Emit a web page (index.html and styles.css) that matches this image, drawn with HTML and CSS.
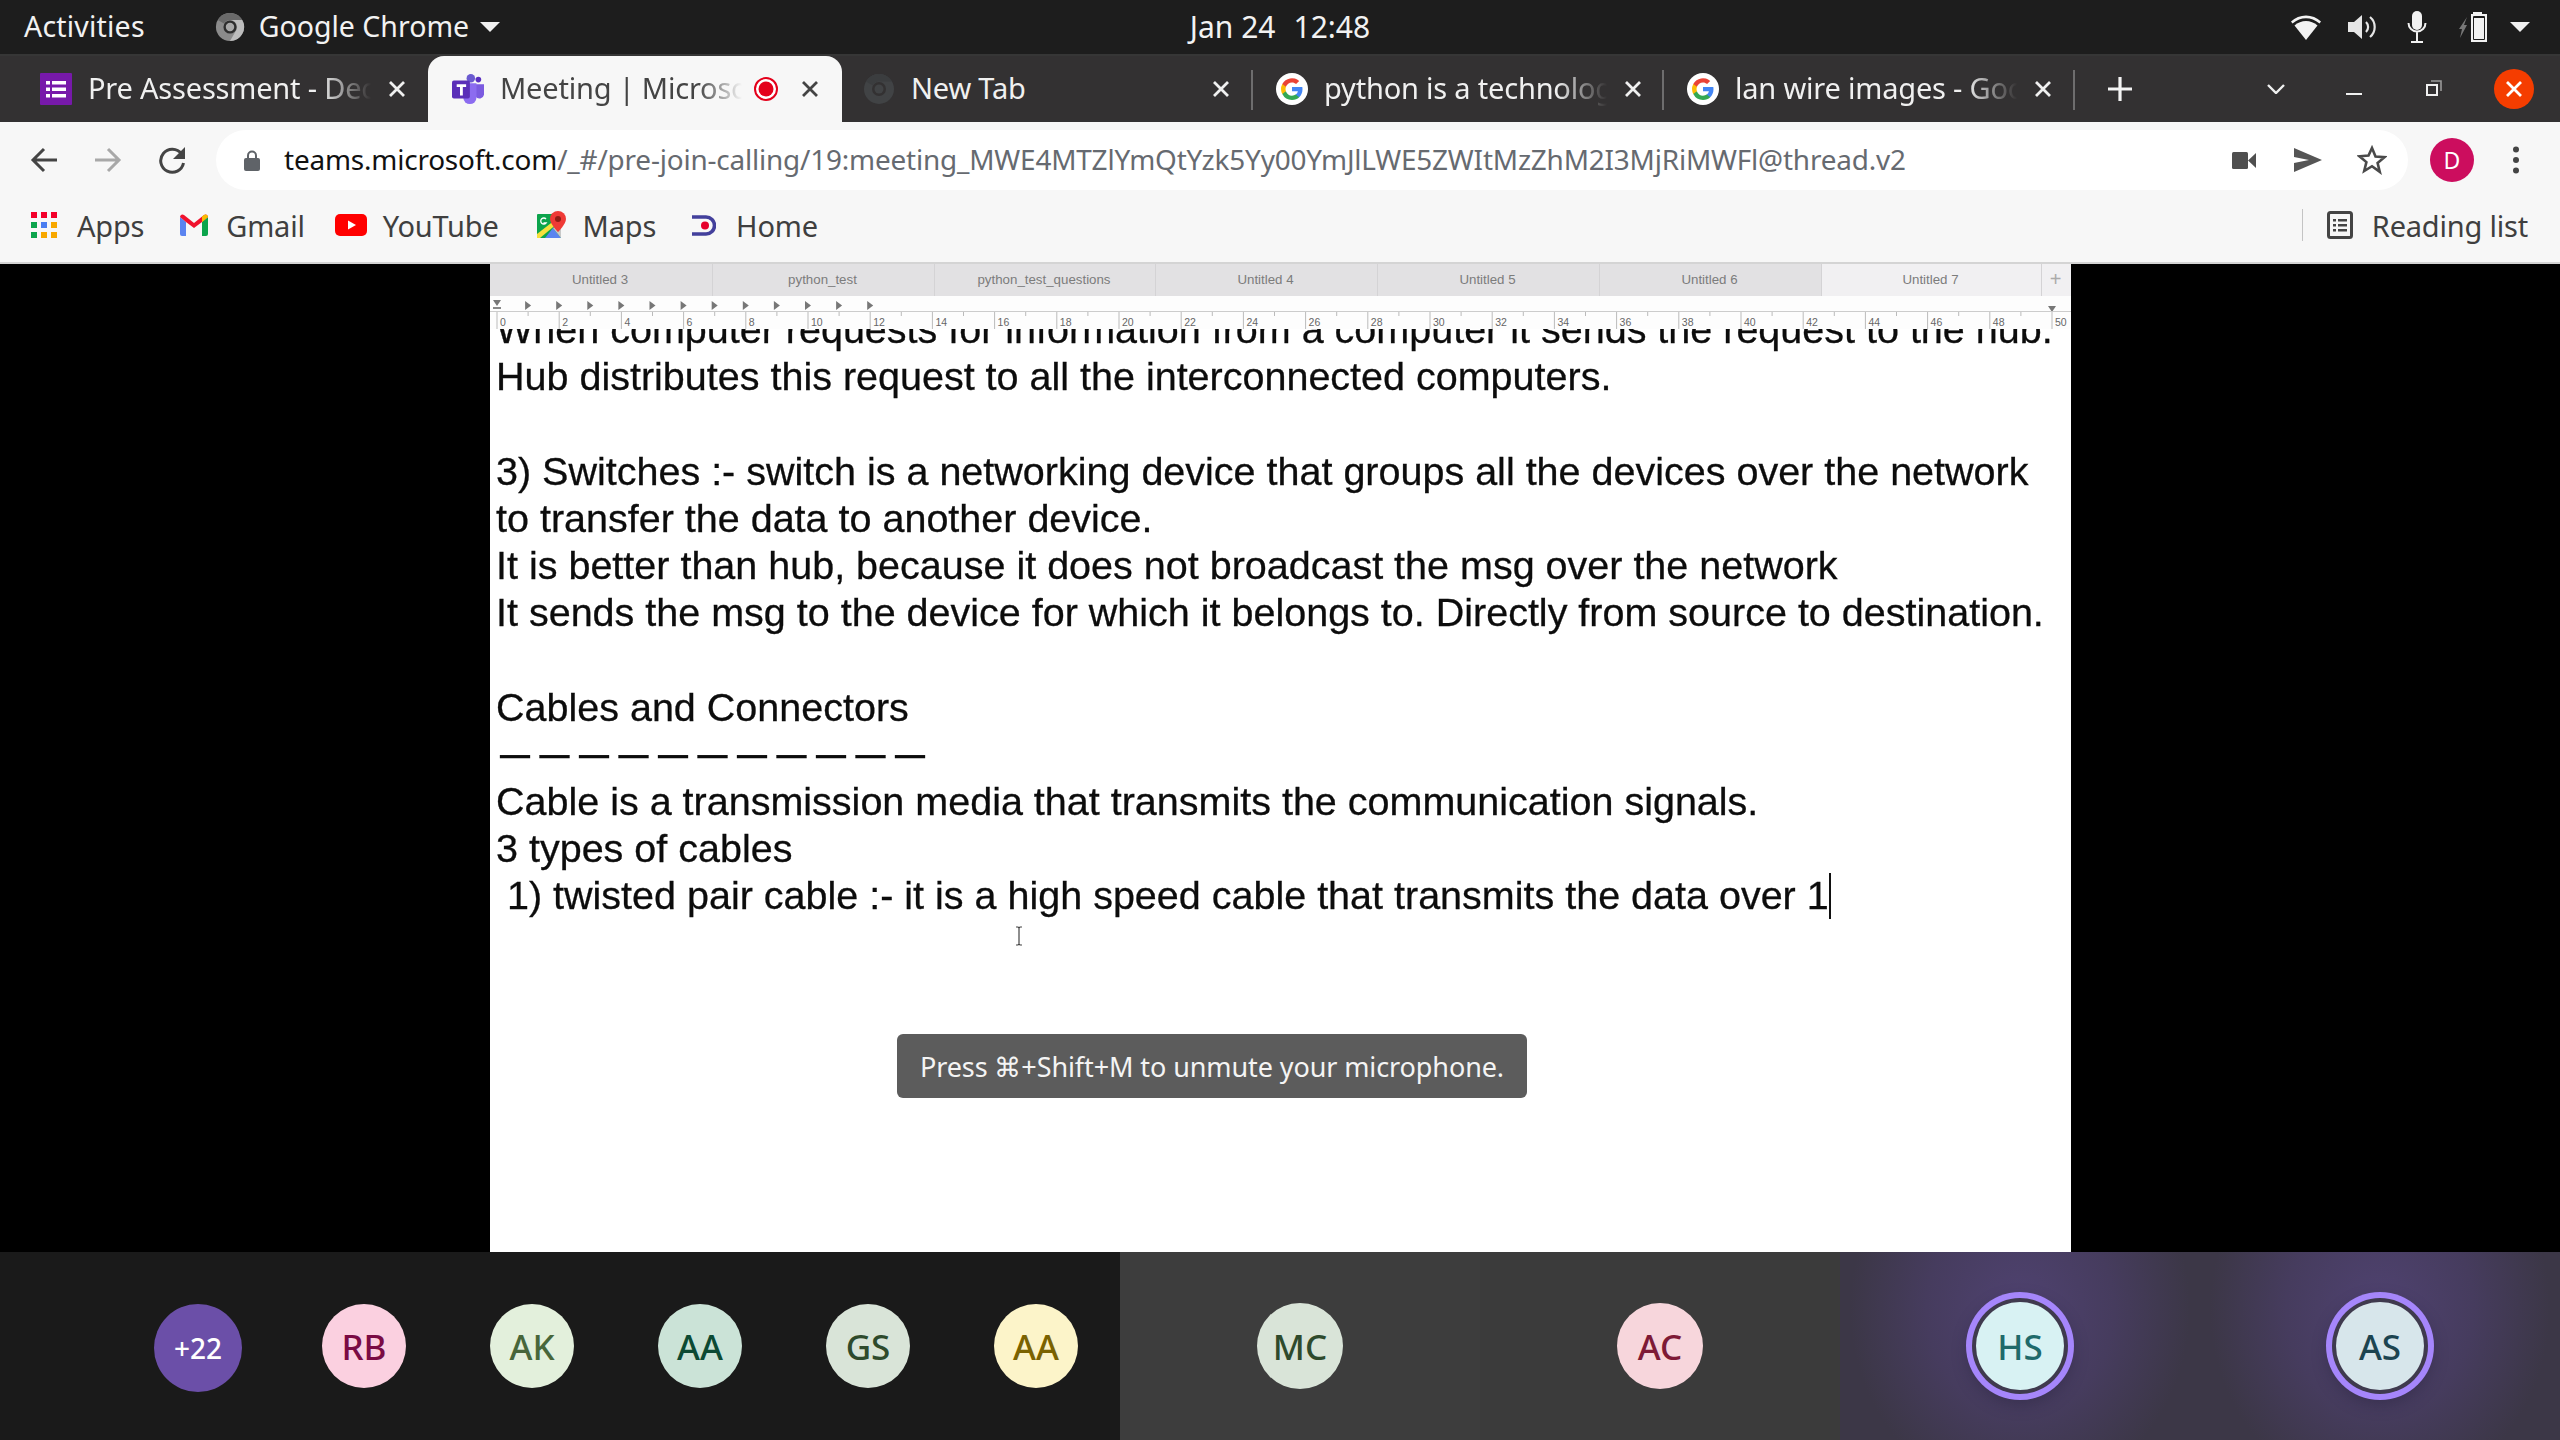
FILE: index.html
```html
<!DOCTYPE html>
<html lang="en">
<head>
<meta charset="utf-8">
<title>Meeting | Microsoft Teams</title>
<link rel="stylesheet" href="styles.css">
</head>
<body>
<svg class="defs" width="0" height="0"><defs>
<g id="g-logo"><circle cx="16" cy="16" r="16" fill="#fff"/><path d="M26.500 16.300c0-.800-.100-1.500-.200-2.200H16v4.200h5.900a5 5 0 0 1-2.200 3.300v2.700h3.500c2-1.900 3.300-4.700 3.300-8z" fill="#4285f4"/><path d="M16 27c3 0 5.400-1 7.200-2.700l-3.500-2.700c-1 .700-2.200 1.100-3.700 1.100-2.800 0-5.300-1.900-6.100-4.500H6.300v2.800A11 11 0 0 0 16 27z" fill="#34a853"/><path d="M9.900 18.200a6.600 6.600 0 0 1 0-4.400V11H6.300a11 11 0 0 0 0 10z" fill="#fbbc05"/><path d="M16 9.400c1.600 0 3 .500 4.100 1.600l3.100-3.100A11 11 0 0 0 6.300 11l3.600 2.800C10.700 11.300 13.200 9.400 16 9.400z" fill="#ea4335"/></g>
<path id="close-x" d="M2 2 16 16M16 2 2 16" fill="none" stroke="currentColor" stroke-width="2.800"/>
</defs></svg>
<div class="screen">
  <header class="topbar">
    <div class="top-left">
      <span class="activities">Activities</span>
      <span class="app"><svg class="chrome-mono" viewBox="0 0 32 32"><circle cx="16" cy="16" r="15" fill="#8b8b8b"/><path d="M29 8.500A15 15 0 0 1 16 31l6.500-11.250A7.500 7.500 0 0 0 16 8.500z" fill="#bdbdbd"/><path d="M16 1a15 15 0 0 1 13 7.500H16a7.500 7.500 0 0 0-6.500 3.750L3 8.500A15 15 0 0 1 16 1z" fill="#6a6a6a"/><circle cx="16" cy="16" r="7" fill="#2d2d2d"/><circle cx="16" cy="16" r="4.500" fill="#a8a8a8"/></svg><span class="app-name">Google Chrome</span><svg class="caret" viewBox="0 0 20 10"><path d="M0 0h20L10 10z" fill="#f0f0f0"/></svg></span>
    </div>
    <div class="clock"><span>Jan 24</span><span>12:48</span></div>
    <div class="status">
      <svg class="st wifi" viewBox="0 0 30 25"><path d="M0 6.500C8-1.500 22-1.500 30 6.500l-1.500 2C20 1.500 10 1.500 1.500 8.500z" fill="#f2f2f2"/><path d="M3.500 10.500C10 4.500 20 4.500 26.500 10.500L15 25z" fill="#f2f2f2"/></svg>
      <svg class="st vol" viewBox="0 0 30 26"><path d="M1 8h6l8-7v24l-8-7H1z" fill="#e6e6e6"/><path d="M19 8a7 7 0 0 1 0 10M23 3a13 13 0 0 1 0 20" stroke="#e6e6e6" stroke-width="2.200" fill="none"/></svg>
      <svg class="st mic" viewBox="0 0 20 32"><rect x="5" y="0" width="10" height="19" rx="5" fill="#f2f2f2"/><path d="M1.500 12a8.500 8.500 0 0 0 17 0M10 21v9M4 31h12" stroke="#f2f2f2" stroke-width="2" fill="none"/></svg>
      <svg class="st batt" viewBox="0 0 29 30"><path d="M8 5 0 17h3l-2 9 7-13H5z" fill="#777"/><path d="M14 0h9v2h5v28H12V2h2z" fill="#f2f2f2"/><rect x="14" y="4" width="12" height="24" rx="1" fill="#1d1d1d"/><rect x="15" y="6" width="10" height="21" fill="#f2f2f2"/></svg>
      <svg class="caret" viewBox="0 0 20 10"><path d="M0 0h20L10 10z" fill="#f0f0f0"/></svg>
    </div>
  </header>

  <nav class="tabstrip">
    <div class="tab t1">
      <svg class="fav" viewBox="0 0 32 32"><rect width="32" height="32" rx="1" fill="#7719aa"/><path d="M6 8h4v3.500H6zm6 0h14v3.500H12zM6 14.500h4V18H6zm6 0h14V18H12zM6 21h4v3.500H6zm6 0h14v3.500H12z" fill="#fff"/></svg>
      <span class="title">Pre Assessment - Dec</span><svg class="x" viewBox="0 0 18 18"><use href="#close-x"/></svg>
    </div>
    <div class="tab active">
      <svg class="fav" viewBox="0 0 34 32"><circle cx="20" cy="4.500" r="4.500" fill="#6a5ad0"/><circle cx="28" cy="6" r="3" fill="#5a2fc0"/><path d="M25 11h9v11a5 5 0 0 1-9 2z" fill="#7b5be0"/><path d="M12 10h14v15a7 7 0 0 1-14 0z" fill="#8c6cf0"/><rect x="0" y="7" width="19" height="19" rx="2" fill="#5a2fb8"/><path d="M5 11h10v3h-3.500v9h-3v-9H5z" fill="#fff"/></svg>
      <span class="title">Meeting | Microsoft</span>
      <svg class="rec" viewBox="0 0 24 24"><circle cx="12" cy="12" r="11" fill="#fff" stroke="#e4001b" stroke-width="2"/><circle cx="12" cy="12" r="7.500" fill="#e4001b"/></svg>
      <svg class="x" viewBox="0 0 18 18"><use href="#close-x"/></svg>
    </div>
    <div class="tab t3 sep">
      <svg class="fav" viewBox="0 0 32 32"><circle cx="16" cy="16" r="15" fill="#414345"/><path d="M16 1a15 15 0 0 1 13 7.500H16a7.500 7.500 0 0 0-6.500 3.750L3 8.500A15 15 0 0 1 16 1z" fill="#3b3d3f"/><circle cx="16" cy="16" r="7" fill="#333132"/><circle cx="16" cy="16" r="4.500" fill="#414345"/></svg>
      <span class="title plain">New Tab</span><svg class="x" viewBox="0 0 18 18"><use href="#close-x"/></svg>
    </div>
    <div class="tab t4 sep">
      <svg class="fav" viewBox="0 0 32 32"><use href="#g-logo"/></svg>
      <span class="title">python is a technology</span><svg class="x" viewBox="0 0 18 18"><use href="#close-x"/></svg>
    </div>
    <div class="tab t5 sep">
      <svg class="fav" viewBox="0 0 32 32"><use href="#g-logo"/></svg>
      <span class="title">lan wire images - Google</span><svg class="x" viewBox="0 0 18 18"><use href="#close-x"/></svg>
    </div>
    <svg class="plus" viewBox="0 0 26 26"><path d="M13 1v24M1 13h24" fill="none" stroke="#f4f4f4" stroke-width="3.200"/></svg>
    <div class="winctl">
      <svg class="chev" viewBox="0 0 18 10"><path d="M1 1l8 8 8-8" fill="none" stroke="#f0f0f0" stroke-width="2.400"/></svg>
      <span class="min"></span>
      <svg class="restore" viewBox="0 0 16 16"><rect x="1" y="5" width="10" height="10" fill="none" stroke="#f0f0f0" stroke-width="2"/><path d="M5 1h10v10" fill="none" stroke="#999" stroke-width="1.600"/></svg>
      <span class="close"><svg class="close-x" viewBox="0 0 18 18"><use href="#close-x"/></svg></span>
    </div>
  </nav>

  <div class="toolbar">
    <svg class="nav back" viewBox="0 0 28 28"><path d="M27 14H4M14 3 3 14l11 11" fill="none" stroke="#444" stroke-width="3"/></svg>
    <svg class="nav fwd" viewBox="0 0 28 28"><path d="M1 14h23M14 3l11 11-11 11" fill="none" stroke="#a8a8a8" stroke-width="3"/></svg>
    <svg class="nav reload" viewBox="0 0 28 28"><path d="M23.500 8a11.500 11.500 0 1 0 2 9" fill="none" stroke="#444" stroke-width="3"/><path d="M27 1v12H15z" fill="#444"/></svg>
    <div class="omnibox">
      <svg class="lock" viewBox="0 0 16 21"><path d="M4 9V5.500a4 4 0 0 1 8 0V9" fill="none" stroke="#5f6368" stroke-width="2"/><rect y="8" width="16" height="13" rx="2" fill="#5f6368"/></svg>
      <span class="url"><b>teams.microsoft.com</b>/_#/pre-join-calling/19:meeting_MWE4MTZlYmQtYzk5Yy00YmJlLWE5ZWItMzZhM2I3MjRiMWFl@thread.v2</span>
      <svg class="omni-ic video" viewBox="0 0 24 17"><rect width="16" height="17" rx="1.500" fill="#4f4f4f"/><path d="M16 8.500 24 1v15z" fill="#4f4f4f"/></svg>
      <svg class="omni-ic send" viewBox="0 0 28 24"><path d="M0 0l28 12L0 24v-9l15-3L0 9z" fill="#555"/></svg>
      <svg class="omni-ic star" viewBox="0 0 30 30"><path d="M15 3l3.500 8.500 9 .700-6.900 5.800 2.200 8.900L15 21.200 7.200 26l2.200-8.900-6.900-5.800 9-.700z" fill="none" stroke="#4a4a4a" stroke-width="2.600"/></svg>
    </div>
    <span class="avatar-d">D</span>
    <svg class="kebab" viewBox="0 0 8 28"><circle cx="4" cy="3.500" r="3" fill="#444"/><circle cx="4" cy="14" r="3" fill="#444"/><circle cx="4" cy="24.500" r="3" fill="#444"/></svg>
  </div>

  <div class="bookmarks">
    <a class="bm"><svg class="bmi apps" viewBox="0 0 26 26"><rect width="6" height="6" fill="#f4002a"/><rect x="10" width="6" height="6" fill="#f4002a"/><rect x="20" width="6" height="6" fill="#f4002a"/><rect y="10" width="6" height="6" fill="#0ca44c"/><rect x="10" y="10" width="6" height="6" fill="#4a7df0"/><rect x="20" y="10" width="6" height="6" fill="#f8a800"/><rect y="20" width="6" height="6" fill="#0ca44c"/><rect x="10" y="20" width="6" height="6" fill="#f8a800"/><rect x="20" y="20" width="6" height="6" fill="#f8a800"/></svg>Apps</a>
    <a class="bm"><svg class="bmi gmail" viewBox="0 0 28 22"><path d="M0 3v17a2 2 0 0 0 2 2h4V8z" fill="#5b84f0"/><path d="M28 3v17a2 2 0 0 1-2 2h-4V8z" fill="#0ca44c"/><path d="M0 3a2.500 2.500 0 0 1 4-2l10 8 10-8a2.500 2.500 0 0 1 4 2l-6 5-8 6-8-6z" fill="#f0122d"/><path d="M22 8l6-5a2.500 2.500 0 0 0-4-2l-2 1.600z" fill="#f8bd00"/></svg>Gmail</a>
    <a class="bm"><svg class="bmi yt" viewBox="0 0 32 22"><rect width="32" height="22" rx="5" fill="#f00"/><path d="M13 6.500l8 4.500-8 4.500z" fill="#fff"/></svg>YouTube</a>
    <a class="bm"><svg class="bmi maps" viewBox="0 0 29 28"><rect y="3" width="24" height="24" rx="1" fill="#0ca44c"/><path d="M8 27l8-10 8 10z" fill="#5b84f0"/><path d="M16 17l8-6v16z" fill="#c8c8c8"/><path d="M0 27v-4L18 9l3 3L3 27z" fill="#f6e03c"/><path d="M21 0a8 8 0 0 1 8 8c0 5-8 13-8 13s-8-8-8-13a8 8 0 0 1 8-8z" fill="#ef3a36"/><circle cx="21" cy="8" r="3" fill="#8f1d15"/><path d="M9 8a3 3 0 1 0 0 4H6.500" fill="none" stroke="#fff" stroke-width="1.300"/></svg>Maps</a>
    <a class="bm"><svg class="bmi home" viewBox="0 0 24 21"><path d="M0 2h14a8.500 8.500 0 0 1 0 17H0" fill="none" stroke="#43409c" stroke-width="3.600"/><circle cx="13" cy="10.500" r="4" fill="#e6002a"/></svg>Home</a>
    <div class="reading">
      <svg class="rl" viewBox="0 0 26 28"><rect x="1.500" y="1.500" width="23" height="25" rx="2" fill="none" stroke="#444" stroke-width="3"/><path d="M6 8h3v2.500H6zm5 0h9v2.500h-9zM6 13h3v2.500H6zm5 0h9v2.500h-9zM6 18h3v2.500H6zm5 0h9v2.500h-9z" fill="#444"/></svg>
      <span>Reading list</span>
    </div>
  </div>

  <main class="stage">
    <section class="doc">
      <div class="doc-head">
        <div class="doc-tabs">
          <span class="dt">Untitled 3</span><span class="dt">python_test</span><span class="dt">python_test_questions</span><span class="dt">Untitled 4</span><span class="dt">Untitled 5</span><span class="dt">Untitled 6</span><span class="dt on">Untitled 7</span><span class="dt add">+</span>
        </div>
        <svg class="ruler" id="ruler" viewBox="0 0 1581 33" width="1581" height="33"></svg>
      </div>
      <div class="doc-text">
        <p>When computer requests for information from a computer it sends the request to the hub.</p>
        <p>Hub distributes this request to all the interconnected computers.</p>
        <p>&nbsp;</p>
        <p>3) Switches :- switch is a networking device that groups all the devices over the network</p>
        <p>to transfer the data to another device.</p>
        <p>It is better than hub, because it does not broadcast the msg over the network</p>
        <p>It sends the msg to the device for which it belongs to. Directly from source to destination.</p>
        <p>&nbsp;</p>
        <p>Cables and Connectors</p>
        <p class="dashes">———————————</p>
        <p>Cable is a transmission media that transmits the communication signals.</p>
        <p>3 types of cables</p>
        <p>&nbsp;1) twisted pair cable :- it is a high speed cable that transmits the data over 1<span class="caret-line"></span></p>
      </div>
      <svg class="ibeam" viewBox="0 0 10 20"><path d="M2 1h2l1 1 1-1h2M5 2v16M2 19h2l1-1 1 1h2" fill="none" stroke="#444" stroke-width="1.200"/></svg>
      <div class="toast">Press ⌘+Shift+M to unmute your microphone.</div>
    </section>
  </main>

  <footer class="roster">
    <div class="seg seg-a">
      <span class="av more">+22</span>
      <span class="av c-rb">RB</span>
      <span class="av c-ak">AK</span>
      <span class="av c-aa">AA</span>
      <span class="av c-gs">GS</span>
      <span class="av c-ay">AA</span>
    </div>
    <div class="seg seg-b"><span class="av big c-mc">MC</span></div>
    <div class="seg seg-b2"><span class="av big c-ac">AC</span></div>
    <div class="seg seg-c"><span class="av big ring c-hs">HS</span></div>
    <div class="seg seg-c"><span class="av big ring c-as">AS</span></div>
  </footer>
</div>
<script src="ruler.js"></script>
</body>
</html>
```

FILE: styles.css
```css
* { box-sizing: border-box; }
html, body { margin: 0; padding: 0; }
body { width: 2560px; height: 1440px; overflow: hidden; background: #000; font-family: "Noto Sans", "Open Sans", sans-serif; }
svg { display: block; flex: none; }
.defs { position: absolute; }
.screen { width: 2560px; height: 1440px; display: flex; flex-direction: column; }

/* GNOME top bar */
.topbar { height: 56px; flex: none; background: #1d1d1d; border-bottom: 2px solid #363636; color: #f2f2f2; font-size: 28.500px; display: grid; grid-template-columns: 1fr auto 1fr; align-items: center; padding: 0 30px; }
.top-left { display: flex; align-items: center; gap: 70px; margin-left: -6px; }
.activities { padding-bottom: 2px; letter-spacing: .2px; }
.app { display: flex; align-items: center; }
.app-name { padding-bottom: 2px; margin: 0 11px 0 14px; }
.chrome-mono { width: 30px; height: 30px; }
.caret { width: 20px; height: 10px; }
.clock { display: flex; gap: 18px; font-size: 30px; padding-bottom: 2px; }
.status { display: flex; align-items: center; justify-content: flex-end; }
.st.wifi { width: 30px; height: 25px; margin-right: 26px; }
.st.vol { width: 30px; height: 26px; margin-right: 30px; }
.st.mic { width: 20px; height: 32px; margin-right: 32px; }
.st.batt { width: 29px; height: 30px; margin-right: 22px; }

/* Chrome tab strip */
.tabstrip { height: 66px; flex: none; background: #333132; display: flex; align-items: center; color: #f0f0f0; font-size: 29px; letter-spacing: -.2px; }
.tab { height: 66px; flex: none; display: flex; align-items: center; position: relative; gap: 16px; width: 411px; padding-right: 22px; }
.tab.t1 { width: 428px; padding-left: 40px; padding-right: 21px; }
.tab.active { width: 414px; background: #f7f7f7; color: #444; border-radius: 16px 16px 0 0; padding-left: 24px; }
.tab.t3 { padding-left: 21px; }
.tab.t4 { padding-left: 23px; padding-right: 21px; }
.tab.t5 { padding-left: 23px; }
.tab.sep::after { content: ""; position: absolute; right: 0; top: 14px; height: 40px; width: 2px; background: #6e6d6e; }
.fav { width: 32px; height: 32px; }
.title { flex: 1; min-width: 0; white-space: nowrap; overflow: hidden; padding-bottom: 4px; -webkit-mask-image: linear-gradient(90deg, #000 82%, transparent 100%); mask-image: linear-gradient(90deg, #000 82%, transparent 100%); }
.title.plain { -webkit-mask-image: none; mask-image: none; }
.rec { width: 24px; height: 24px; margin: 0 6px 0 -4px; }
.x { width: 20px; height: 18px; color: inherit; }
.plus { width: 26px; height: 26px; margin-left: 32px; }
.winctl { flex: 1; display: flex; align-items: center; justify-content: flex-end; padding-right: 26px; }
.chev { width: 18px; height: 10px; margin-right: 61px; }
.min { width: 16px; height: 2px; background: #f0f0f0; margin: 10px 64px 0 0; }
.restore { width: 16px; height: 16px; margin: -2px 52px 0 0; }
.close { width: 40px; height: 40px; border-radius: 50%; background: #f53d00; color: #fff; display: flex; align-items: center; justify-content: center; }
.close-x { width: 18px; height: 18px; }

/* Toolbar */
.toolbar { height: 76px; flex: none; background: #f7f7f7; display: flex; align-items: center; padding-left: 30px; }
.nav { width: 28px; height: 28px; }
.nav.back { margin-right: 36px; }
.nav.fwd { margin-right: 36px; }
.nav.reload { margin-right: 30px; }
.omnibox { width: 2192px; height: 60px; background: #fff; border-radius: 30px; display: flex; align-items: center; padding: 0 21px 0 28px; font-size: 27.900px; color: #666a70; flex: none; }
.lock { width: 16px; height: 21px; margin-right: 24px; }
.url { flex: 1; white-space: nowrap; overflow: hidden; letter-spacing: -.18px; padding-bottom: 2px; }
.url b { font-weight: 400; color: #111; }
.omni-ic { flex: none; }
.omni-ic.video { width: 24px; height: 17px; }
.omni-ic.send { width: 28px; height: 24px; margin-left: 38px; }
.omni-ic.star { width: 30px; height: 30px; margin-left: 35px; }
.avatar-d { width: 44px; height: 44px; margin-left: 22px; border-radius: 50%; background: #cc0d5e; color: #fff; font-size: 23px; display: flex; align-items: center; justify-content: center; flex: none; }
.kebab { width: 8px; height: 28px; margin-left: 38px; }

/* Bookmarks */
.bookmarks { height: 66px; flex: none; background: #f7f7f7; border-bottom: 2px solid #d4d4d4; display: flex; align-items: center; padding: 0 32px 10px 31px; color: #3f3f3f; font-size: 29px; letter-spacing: -.2px; }
.bm { display: flex; align-items: center; }
.bmi { margin-right: 18px; }
.bmi.apps { width: 26px; height: 26px; margin-right: 20px; }
.bmi.gmail { width: 28px; height: 22px; margin: 0 18px 0 36px; }
.bmi.yt { width: 32px; height: 22px; margin: 0 16px 0 30px; }
.bmi.maps { width: 29px; height: 28px; margin: 0 17px 0 38px; }
.bmi.home { width: 24px; height: 21px; margin: 0 20px 0 36px; }
.reading { margin-left: auto; height: 32px; border-left: 1px solid #c4c4c4; padding-left: 24px; display: flex; align-items: center; gap: 19px; }
.rl { width: 26px; height: 28px; }

/* Shared screen */
.stage { flex: 1; min-height: 0; background: #000; display: flex; padding-left: 490px; }
.doc { width: 1581px; background: #fff; position: relative; overflow: hidden; }
.doc-head { position: relative; z-index: 1; }
.doc-tabs { height: 32px; display: grid; grid-template-columns: 222px 222px 221px 222px 222px 222px 220px 30px; background: #e2e1e3; color: #7c7c7c; font-size: 13.300px; font-family: "Liberation Sans", sans-serif; }
.dt { display: flex; align-items: center; justify-content: center; border-left: 1px solid #d4d3d5; padding: 0 2px 2px 0; }
.dt:first-child { border-left: 0; }
.dt.on { background: #f1f0f2; }
.dt.add { background: #f1f0f2; font-size: 20px; color: #aaa; }
.ruler { background: #fdfdfd; font-family: "Liberation Sans", sans-serif; }
.doc-text { margin-top: -23px; padding-left: 6px; font-family: "Liberation Sans", Arial, sans-serif; font-size: 39.500px; line-height: 47.200px; color: #0c0c0c; -webkit-text-stroke: .3px #0c0c0c; filter: blur(.35px); }
.doc-text p { margin: 0; white-space: pre; }
.doc-text .dashes { font-size: 30px; font-weight: 700; letter-spacing: 9.500px; margin-left: 4px; }
.caret-line { display: inline-block; width: 2px; height: 46px; background: #111; vertical-align: -10px; }
.ibeam { position: absolute; left: 524px; top: 662px; width: 10px; height: 20px; }
.toast { position: absolute; left: 407px; top: 770px; width: 630px; height: 64px; background: #5c5c5c; border-radius: 6px; color: #f4f4f4; font-size: 27px; display: flex; align-items: center; justify-content: center; letter-spacing: -.1px; }

/* Participants */
.roster { height: 188px; flex: none; display: grid; grid-template-columns: 1120px 360px 360px 360px 360px; color: #333; }
.seg { display: flex; align-items: center; justify-content: center; }
.seg-a { background: #1a1a1a; justify-content: flex-start; padding-left: 154px; gap: 84px; }
.seg-b { background: #3d3d3d; }
.seg-b2 { background: #3b3b3b; }
.seg-c { background: #3c3747 radial-gradient(ellipse 170px 190px at 50% 30%, #4f4270 0%, #463c5e 55%, #3c3747 100%); }
.av { width: 84px; height: 84px; border-radius: 50%; display: flex; align-items: center; justify-content: center; font-size: 35px; font-weight: 500; position: relative; }
.av.more { width: 88px; height: 88px; margin-right: -4px; background: #6b4fa8; color: #fff; font-size: 28px; top: 2px; }
.av.big { width: 86px; height: 86px; }
.av.ring { width: 88px; height: 88px; box-shadow: 0 0 0 4px #3f3a4e, 0 0 0 10px #a586fb, 0 6px 16px 8px rgba(30,25,45,.35); }
.c-rb { background: #fbd0e0; color: #7a0b44; }
.c-ak { background: #e3f0dc; color: #47663a; }
.c-aa { background: #cbe3d7; color: #0c4a33; }
.c-gs { background: #d9e4d8; color: #2e4a2c; }
.c-ay { background: #fcf4c9; color: #7a6200; }
.c-mc { background: #d9e4d8; color: #2e4a2c; }
.c-ac { background: #f7d6dc; color: #7e1a36; }
.c-hs { background: #d8f2f3; color: #1f6a6a; }
.c-as { background: #d7e6eb; color: #1c4450; }
```

FILE: ruler.js
```js
var s = document.getElementById('ruler'), h = '';
var x0 = 7, u = 31.1;
for (var i = 0; i <= 50; i++) {
  var x = x0 + i * u;
  if (i % 2 === 0) {
    h += '<path d="M' + x + ' 15V33" stroke="#bbb" stroke-width="1"/>';
    h += '<text x="' + (x + 3) + '" y="30" font-size="10.500" fill="#666">' + i + '</text>';
  } else {
    h += '<path d="M' + x + ' 15V20" stroke="#bbb" stroke-width="1"/>';
  }
}
for (var j = 1; j <= 12; j++) {
  var a = x0 + j * u;
  h += '<path d="M' + (a - 3) + ' 5l6 4.500-6 4.500z" fill="#777"/>';
}
h += '<path d="M' + (x0 - 4) + ' 4h8l-4 6z" fill="#777"/><path d="M' + (x0 - 4) + ' 11h8v2h-8z" fill="#888"/>';
h += '<path d="M' + (x0 + 50 * u - 4) + ' 10h8l-4 6z" fill="#777"/>';
h += '<path d="M0 15.500H1581" stroke="#ccc" stroke-width="1"/>';
s.innerHTML = h;
```
